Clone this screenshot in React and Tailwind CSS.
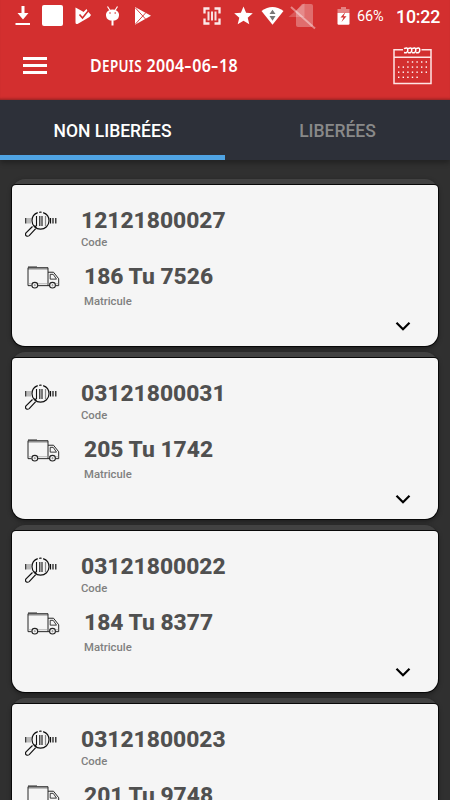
const releves = [
  { code: '12121800027', matricule: '186 Tu 7526' },
  { code: '03121800031', matricule: '205 Tu 1742' },
  { code: '03121800022', matricule: '184 Tu 8377' },
  { code: '03121800023', matricule: '201 Tu 9748' },
]

function StatusBar() {
  return (
    <div className="flex h-8 items-center text-white">
      <svg className="h-8 w-[320px] shrink-0" viewBox="0 0 320 32" fill="#fff">
        {/* download */}
        <path d="M21.500 6h3v7h4l-5.500 6.500-5.500-6.500h4zM15.500 23h14.500v2h-14.500z" />
        <rect x="42" y="5" width="21" height="21" rx="2" />
        {/* play protect */}
        <path d="M75.500 7.500L82 11l1.500 1 3-3 1.500 2.500 3 3.500-1.500 2-12 7q-2 .5-2-1.500z" />
        <path d="M79.500 14.500l3 3.500 6-7.500" fill="none" stroke="#d32f2f" strokeWidth="1.600" />
        {/* debug robot */}
        <path d="M106 14a6.700 6 0 0 1 13 0q.5 5-4 6.500h-5q-4.500-1.500-4-6.500zM111.500 20h2v5.500h-2z" />
        <path d="M107.500 6.500l2.500 4M117.500 6.500l-2.500 4" stroke="#fff" strokeWidth="1.200" />
        <circle cx="110" cy="13" r=".8" fill="#d32f2f" />
        <circle cx="115.200" cy="13" r=".8" fill="#d32f2f" />
        {/* play store */}
        <path d="M135 7l16 8.700-16 9z" />
        <path d="M135 7.500l11 12M135 24.500l11-12" stroke="#d32f2f" strokeWidth=".9" />
        {/* barcode scanner */}
        <path d="M209.500 8.500h-5v5M214.500 8.500h5v5M209.500 23.500h-5v-5M214.500 23.500h5v-5" fill="none" stroke="#fff" strokeOpacity=".9" strokeWidth="2.300" />
        <path d="M208.500 11.500v9M212 11.500v9M215.500 11.500v9" stroke="#fff" strokeOpacity=".85" strokeWidth="2" />
        <path d="M243.500 6.500l2.600 6.200 6.700.6-5.100 4.400 1.600 6.600-5.800-3.500-5.800 3.500 1.600-6.600-5.100-4.400 6.700-.6z" />
        {/* wifi */}
        <path d="M261.500 11q11-8 22 0l-11 13.800z" />
        <path d="M272.500 9.700l3 4.300h-6zM272.500 20.800l3-4.800h-6z" fill="#777" />
        {/* no sim */}
        <path d="M302 4h9q2 0 2 2v19q0 2-2 2h-13q-2 0-2-2V11z" fillOpacity=".3" />
        <path d="M304.500 3v14h-16z" fillOpacity=".2" />
        <path d="M291 7l24 21.500" stroke="#fff" strokeOpacity=".42" strokeWidth="2" />
      </svg>
      <svg className="ml-[17px] h-8 w-[13px] shrink-0" viewBox="0 0 13 32">
        <path d="M4 7h5v2h3.500v4H.5V9H4z" fill="#fff" fillOpacity=".4" />
        <path d="M.5 13h12v10.500q0 1.200-1.200 1.200H1.700q-1.200 0-1.200-1.200z" fill="#fff" />
        <path d="M8.500 12l-5 5.500h3L4.500 22l5-5.700h-3z" fill="#d32f2f" />
      </svg>
      <span className="ml-[7px] w-[28px] shrink-0 pt-px text-[14.500px] leading-8 tracking-[-0.100px]">66%</span>
      <span className="ml-[11px] pt-px text-[17.800px] leading-8 font-medium tracking-[-0.2px]">10:22</span>
    </div>
  )
}

function CalendarIcon() {
  const dots = []
  for (let r = 0; r < 4; r++) {
    for (let c = 0; c < 7; c++) {
      if (r === 0 && c < 2) continue
      if (r === 3 && c > 4) continue
      dots.push(<rect key={`${r}-${c}`} x={5 + c * 4.6} y={14.3 + r * 5.1} width="1.400" height="1.400" />)
    }
  }
  return (
    <svg className="h-[38px] w-[39px]" viewBox="0 0 39 38" fill="#fff">
      <path d="M10 2.700H1v33.800h37V2.700H28.500M1 10.300h37" fill="none" stroke="#ffe5e5" strokeWidth="1.500" />
      {[12.5, 16.5, 20.5, 24.5].map((x) => (
        <path key={x} d={`M${x - 1.5} 1.700q3.800-2 3.800 1.300t-3.800 2.500`} fill="none" stroke="#fff" strokeWidth="1.500" />
      ))}
      {dots}
    </svg>
  )
}

function CodeIcon() {
  return (
    <svg className="h-[28px] w-8" viewBox="0 0 32 28" fill="none" stroke="#111">
      <circle cx="15.500" cy="9.700" r="8.500" strokeWidth="1.200" strokeDasharray="37 1.500 2.500 1.500" />
      <path d="M.8 7v5.500M28 7v5.500M30.800 7v5.500M25.500 7v5.500" strokeWidth="1.200" />
      <path d="M3 7v5.500M5 7v5.500" stroke="#888" strokeWidth="1.100" />
      <path d="M11.500 5v10M14.800 5v10M17 5v10" strokeWidth="1.100" />
      <path d="M20.500 5v10" stroke="#888" strokeWidth="1.200" />
      <path d="M7.500 15.500L1 21.800q-1.200 1.700.2 3 1.500 1 3-.2l6.500-7M9.500 14.500l2 2" strokeWidth="1.200" />
    </svg>
  )
}

function TruckIcon() {
  return (
    <svg className="h-[23px] w-[33px]" viewBox="0 0 33 24" preserveAspectRatio="none" fill="none" stroke="#222">
      <path d="M1 .7h9" stroke="#777" />
      <path d="M1 3h20" stroke="#aaa" strokeWidth="1.800" />
      <path d="M4.500 20.500H1V1.800h20v18.700H11M21 6.500h5.500l5.200 6.800v7.200h-3M21 20.500h2" strokeWidth="1" />
      <path d="M23.200 8.700h3l3.300 5h-6.300z" strokeWidth=".9" />
      <path d="M1.500 18.500h3M11 18.500h12M29 18.500h2.500" stroke="#999" strokeWidth=".7" />
      <circle cx="7.800" cy="20" r="2.900" strokeWidth="1.100" />
      <circle cx="25.500" cy="20" r="2.900" strokeWidth="1.100" />
      <circle cx="7.800" cy="20" r=".6" stroke="#888" />
      <circle cx="25.500" cy="20" r=".6" stroke="#888" />
    </svg>
  )
}

function Card({ code, matricule }) {
  return (
    <div className="h-[167px] shrink-0 rounded-[13px] bg-[#424242] pt-[6px] shadow-[0_2px_5px_rgba(0,0,0,0.45)]">
      <div className="flex h-[161px] rounded-t-[4px] rounded-b-[13px] bg-[#f5f5f5] shadow-[0_0_0_1px_#080808]">
        <div className="flex w-[69px] shrink-0 flex-col pt-[26px] pl-[13px]">
          <CodeIcon />
          <div className="mt-[27px] ml-[2px]">
            <TruckIcon />
          </div>
        </div>
        <div className="flex flex-1 flex-col pt-[22px]">
          <p className="text-[22.800px] leading-[27px] font-extrabold text-[#505050]">{code}</p>
          <p className="mt-px text-[11.300px] leading-[16px] font-medium text-[#808080]">Code</p>
          <p className="mt-[12px] ml-[3px] text-[22.800px] leading-[27px] font-extrabold text-[#505050]">{matricule}</p>
          <p className="mt-[4px] ml-[3px] text-[11.300px] leading-[16px] font-medium text-[#808080]">Matricule</p>
        </div>
        <button className="mr-[27.500px] mb-[14px] self-end">
          <svg className="h-[11px] w-4" viewBox="0 0 16 11" fill="none" stroke="#000" strokeWidth="2.200">
            <path d="M1.500 1.800L8 8.300l6.500-6.500" />
          </svg>
        </button>
      </div>
    </div>
  )
}

export default function App() {
  return (
    <div className="flex h-[800px] w-[450px] flex-col overflow-hidden bg-[#303030] font-[Roboto,sans-serif]">
      <header className="h-[100px] shrink-0 bg-[#d32f2f] shadow-[inset_0_-3px_3px_-2px_rgba(0,0,0,0.3)]">
        <StatusBar />
        <div className="flex h-[68px] items-center pl-[23px]">
          <button className="flex w-6 flex-col gap-[4.500px] pb-px">
            <span className="h-[2.500px] bg-white" />
            <span className="h-[2.500px] bg-white" />
            <span className="h-[2.500px] bg-white" />
          </button>
          <h1 className="ml-[43px] w-[160px] pb-[2px] font-['Noto_Sans',sans-serif] text-[18.500px] leading-6 font-semibold whitespace-nowrap text-white">
            <span className="inline-block origin-left scale-x-[0.865] tracking-[0.400px]">
              D<span className="text-[15.500px]">EPUIS</span> 2004
              <span className="inline-block w-[9px] origin-left scale-x-[1.4]">-</span>06
              <span className="inline-block w-[9px] origin-left scale-x-[1.4]">-</span>18
            </span>
          </h1>
          <button className="ml-[143px]">
            <CalendarIcon />
          </button>
        </div>
      </header>

      <nav className="z-10 flex h-[60px] shrink-0 bg-[#2d3039] text-[17.500px] font-medium shadow-[0_3px_5px_rgba(0,0,0,0.3)]">
        <button className="h-full w-[225px] border-b-[5px] border-[#4fa3e3] pt-[7px] text-white">NON LIBERÉES</button>
        <button className="h-full w-[225px] pt-[2px] text-[#898989]">LIBERÉES</button>
      </nav>

      <main className="flex flex-1 flex-col gap-[6px] overflow-hidden px-3 pt-[19px]">
        {releves.map((r) => (
          <Card key={r.code} code={r.code} matricule={r.matricule} />
        ))}
      </main>
    </div>
  )
}
